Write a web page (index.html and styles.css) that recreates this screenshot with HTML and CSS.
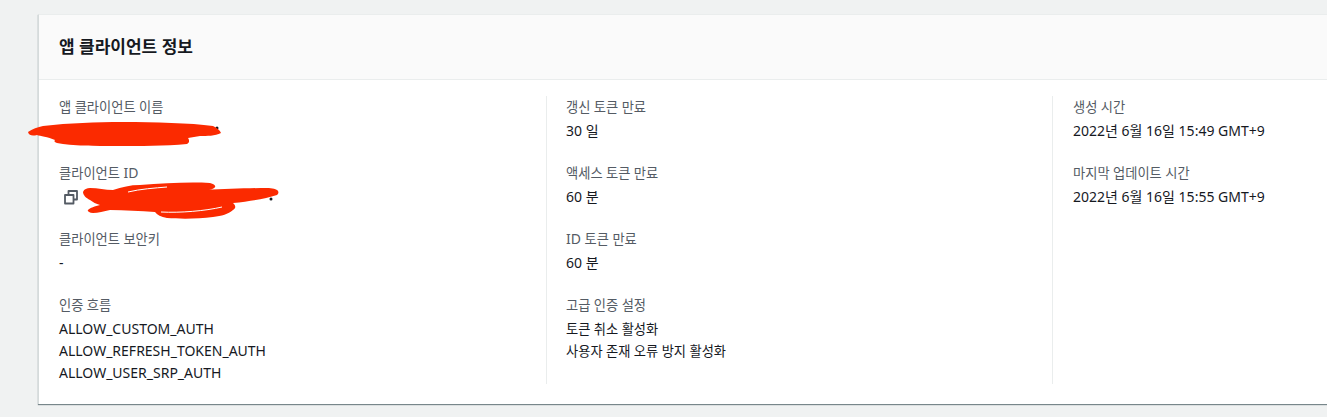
FILE: index.html
```html
<!DOCTYPE html>
<html lang="ko">
    <head>
        <meta charset="utf-8">
        <title>앱 클라이언트 정보</title>
        <link rel="stylesheet" href="styles.css">
    </head>
    <body>
        <div class="card">
            <div class="card-header">
                <h2>앱 클라이언트 정보</h2>
            </div>
            <div class="card-body">
                <div class="column">
                    <div class="item">
                        <div class="label"><span class="ko">앱 클라이언트 이름</span></div>
                        <div class="value">&nbsp;</div>
                    </div>
                    <div class="item">
                        <div class="label"><span class="ko">클라이언트</span> ID</div>
                        <div class="value">
                            <svg class="copy-icon" viewBox="0 0 16 16" width="16" height="16">
                                <path d="M2 6h8.5v8.500h-8.500z M5.500 5.500v-3.500h8.500v8.500h-3.500" fill="none" stroke="#545b64" stroke-width="1.800" stroke-linejoin="round"/>
                            </svg>
                        </div>
                    </div>
                    <div class="item">
                        <div class="label"><span class="ko">클라이언트 보안키</span></div>
                        <div class="value">-</div>
                    </div>
                    <div class="item">
                        <div class="label"><span class="ko">인증 흐름</span></div>
                        <div class="value">ALLOW_CUSTOM_AUTH</div>
                        <div class="value">ALLOW_REFRESH_TOKEN_AUTH</div>
                        <div class="value">ALLOW_USER_SRP_AUTH</div>
                    </div>
                </div>
                <div class="column">
                    <div class="item">
                        <div class="label"><span class="ko">갱신 토큰 만료</span></div>
                        <div class="value">30 일</div>
                    </div>
                    <div class="item">
                        <div class="label"><span class="ko">액세스 토큰 만료</span></div>
                        <div class="value">60 분</div>
                    </div>
                    <div class="item">
                        <div class="label">ID <span class="ko">토큰 만료</span></div>
                        <div class="value">60 분</div>
                    </div>
                    <div class="item">
                        <div class="label"><span class="ko">고급 인증 설정</span></div>
                        <div class="value"><span class="ko">토큰 취소 활성화</span></div>
                        <div class="value"><span class="ko">사용자 존재 오류 방지 활성화</span></div>
                    </div>
                </div>
                <div class="column">
                    <div class="item">
                        <div class="label"><span class="ko">생성 시간</span></div>
                        <div class="value">2022년 6월 16일 15:49 GMT+9</div>
                    </div>
                    <div class="item">
                        <div class="label"><span class="ko">마지막 업데이트 시간</span></div>
                        <div class="value">2022년 6월 16일 15:55 GMT+9</div>
                    </div>
                </div>
            </div>
        </div>

        <!-- red marker scribbles over the hidden values -->
        <svg class="scribble" width="1327" height="417" viewBox="0 0 1327 417">
            <circle cx="217" cy="128" r="1.500" fill="#16191f"/>
            <circle cx="271" cy="199" r="1.500" fill="#16191f"/>
            <path d="M28 132 C32 129 38 127 43 126 C70 123 95 122 123 122 C155 122 190 123 213 126 C217 128 220 130 221 133 C215 136 207 136 200 136 C196 137 192 137 188 138 C190 141 189 143 187 144 C165 146 140 146 117 146 C95 146 72 146 57 143 C54 142 54 141 55 140 C48 137 40 136 37 135 C33 136 29 136 28 132 Z" fill="#fb2a00"/>
            <path d="M83 192 C84 189 87 188 90 188 C98 188 105 190 113 190 C122 187 130 185 140 185 C165 183 190 182 210 183 C214 184 216 186 215 187 C214 189 210 190 207 190 C225 189 250 188 267 188 C272 188 277 189 278 191 C279 193 278 194 277 195 C265 199 250 201 233 203 C236 206 236 208 233 210 C228 214 222 216 213 217 C198 219 180 219 167 218 C161 217 157 215 155 212 C140 211 125 210 110 210 C104 211 98 213 93 213 C89 213 87 211 88 210 C90 208 95 206 100 205 C96 204 93 202 90 200 C86 198 83 195 83 192 Z" fill="#fb2a00"/>
            <path d="M128 192 C140 189 155 188 167 187" fill="none" stroke="#ffffff" stroke-width="1"/>
            <path d="M161 212 C180 213 205 211 222 207" fill="none" stroke="#ffffff" stroke-width="1"/>
        </svg>
    </body>
</html>
```

FILE: styles.css
```css
html, body {
    margin: 0;
    height: 100%;
    overflow: hidden;
}
body {
    background-color: #f0f2f2;
    font-family: "Noto Sans", "Noto Sans CJK KR", sans-serif;
    font-size: 14px;
    line-height: 22px;
    color: #16191f;
    padding: 14px 0 0 38px;
    box-sizing: border-box;
}
.card {
    width: 1560px;
    background-color: #ffffff;
    border-top: 1px solid #eaeded;
    border-left: 1px solid #d5dbdb;
    box-shadow: 0 1px 1px 0 rgba(0, 28, 36, 0.5);
}
.card-header {
    background-color: #fafafa;
    border-bottom: 1px solid #eaeded;
    padding: 20px;
    height: 24px;
}
.card-header h2 {
    margin: 0;
    font-size: 17px;
    line-height: 24px;
    font-weight: 700;
}
.card-body {
    display: grid;
    grid-template-columns: 487px 506px 507px;
    padding: 16px 20px 20px;
}
.column {
    display: flex;
    flex-direction: column;
    gap: 20px;
    min-height: 288px;
}
.column + .column {
    border-left: 1px solid #eaeded;
    padding-left: 19px;
}
.column:last-child {
    padding-left: 20px;
}
.label {
    color: #545b64;
    margin-bottom: 2px;
}
.value {
    display: flex;
    align-items: center;
    min-height: 22px;
}
/* hangul runs sit a bit tighter than the latin text */
.ko {
    font-size: 13.250px;
}
.copy-icon {
    margin-left: 4px;
}
.scribble {
    position: absolute;
    top: 0;
    left: 0;
}
```
